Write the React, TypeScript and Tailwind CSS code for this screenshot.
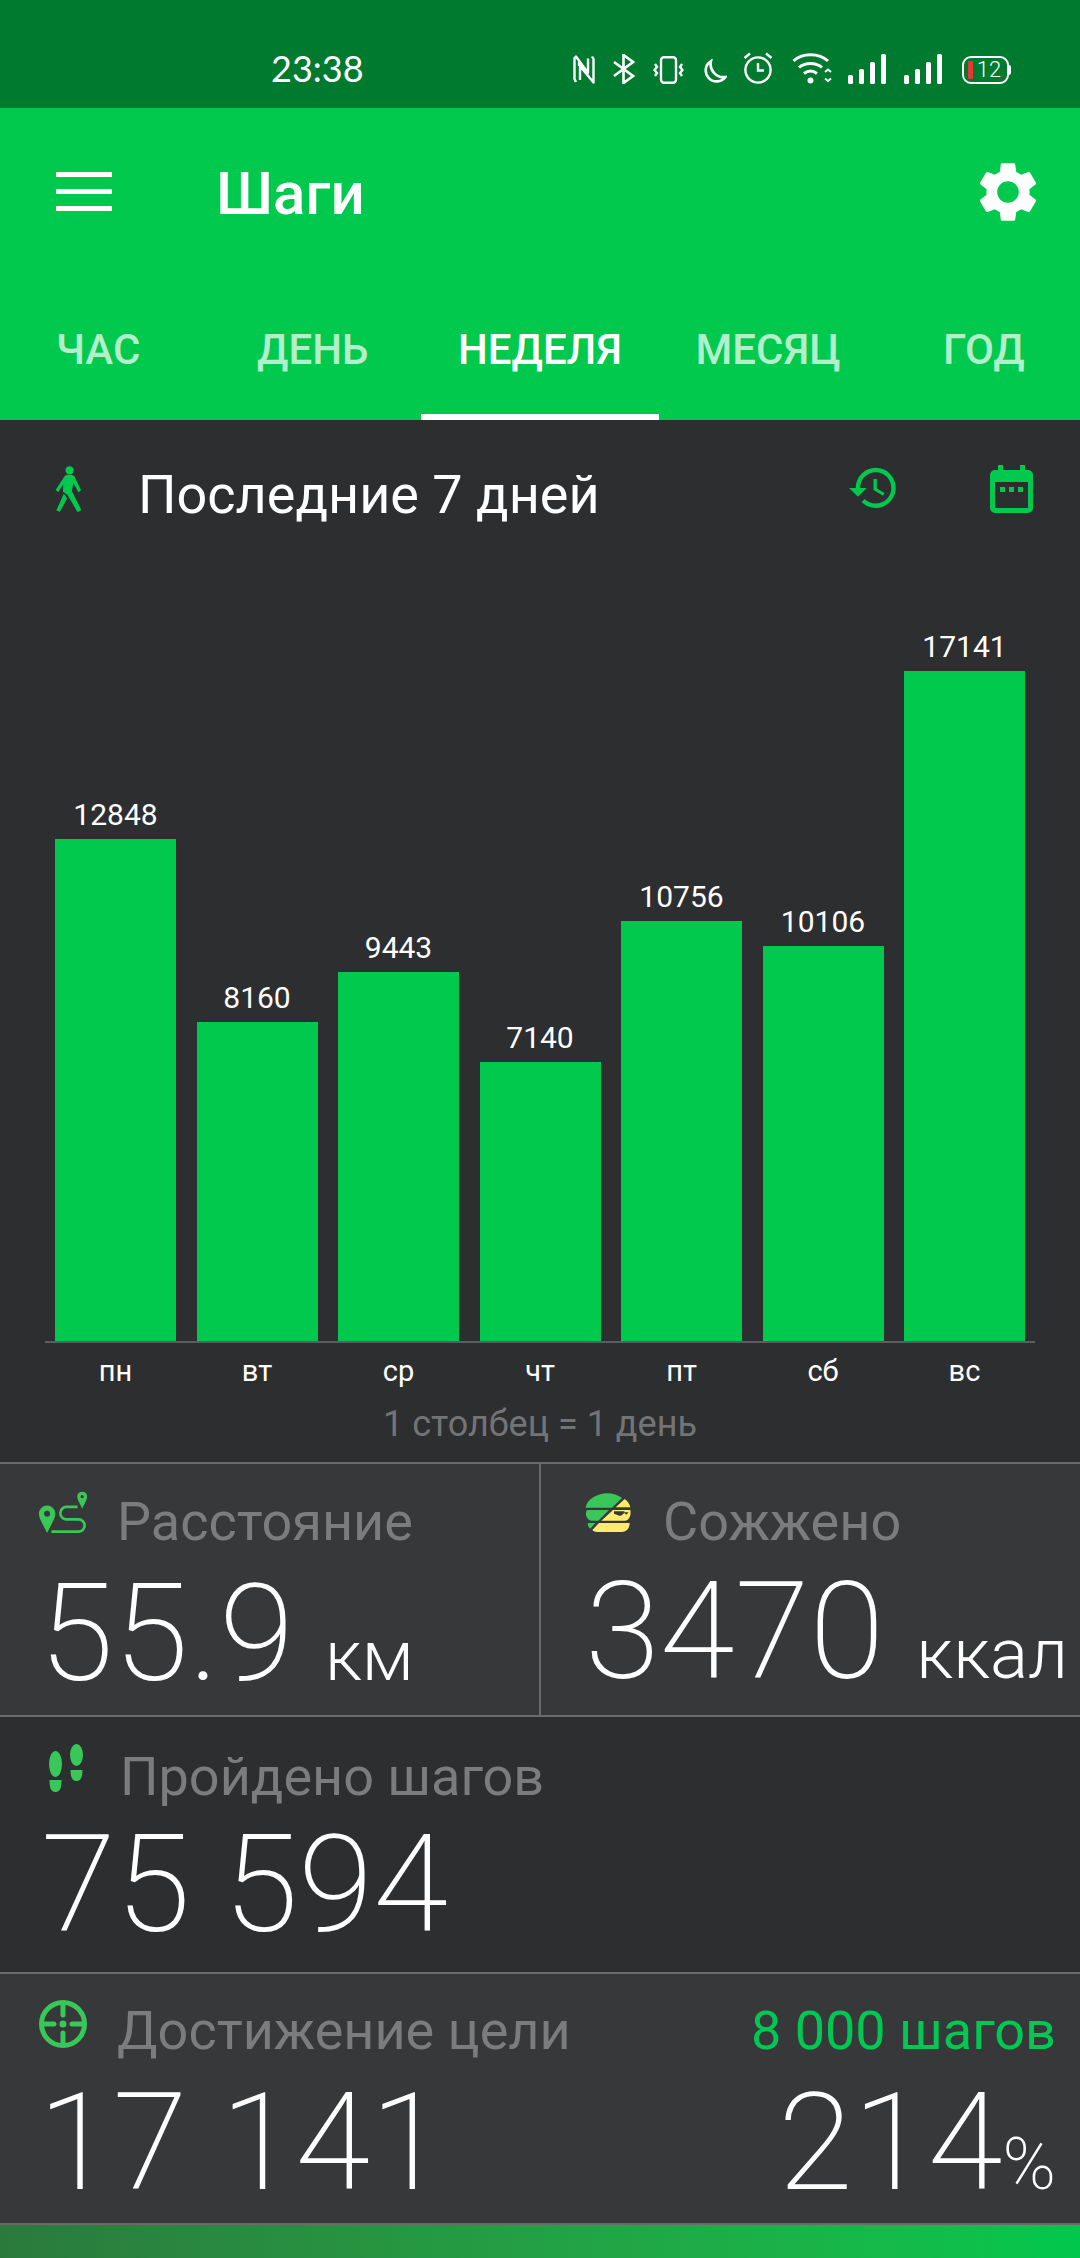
const font = { fontFamily: 'Roboto, sans-serif' };

const days = [
  { label: 'пн', value: 12848, height: 502 },
  { label: 'вт', value: 8160, height: 319 },
  { label: 'ср', value: 9443, height: 369 },
  { label: 'чт', value: 7140, height: 279 },
  { label: 'пт', value: 10756, height: 420 },
  { label: 'сб', value: 10106, height: 395 },
  { label: 'вс', value: 17141, height: 670 },
];

function SignalIcon() {
  return (
    <svg width="38" height="30" viewBox="0 0 38 30" fill="#fff">
      <rect x="0" y="21" width="5" height="9" rx="1.5" />
      <rect x="11" y="15" width="5" height="15" rx="1.5" />
      <rect x="22" y="8" width="5" height="22" rx="1.5" />
      <rect x="33" y="0" width="5" height="30" rx="1.5" />
    </svg>
  );
}

function StatusBar() {
  return (
    <div className="h-[108px] bg-[#007a2f] flex items-end pb-[24px] pl-[271px] text-white">
      <span className="w-[302px] text-[36px] leading-[32px]" style={{ fontFamily: 'Lato, sans-serif' }}>23:38</span>
      {/* nfc */}
      <svg width="22" height="29" viewBox="0 0 22 29" fill="none" stroke="#fff" strokeWidth="2.4" strokeLinejoin="round">
        <path d="M3 27 L1.5 24 V3 L3 1.5 L15 18 V3.5 M6 7 V11 M19 1.5 L20.5 4 V27.5 L7 11 V25" />
      </svg>
      <svg className="ml-[18px]" width="22" height="30" viewBox="0 0 22 30" fill="none" stroke="#fff" strokeWidth="2.6">
        <path d="M1 8 L20 22 L10.5 29 V1 L20 8 L1 22" />
      </svg>
      <svg className="ml-[18px]" width="31" height="28" viewBox="0 0 31 28" fill="none" stroke="#fff" strokeWidth="2.4">
        <rect x="8" y="1.2" width="15" height="25.6" rx="3" />
        <path d="M2 8 L4 11 L1.5 14 L4 17 L2 20 M29 8 L27 11 L29.5 14 L27 17 L29 20" />
      </svg>
      <svg className="ml-[18px]" width="25" height="25" viewBox="0 0 25 25" fill="none" stroke="#fff" strokeWidth="2.6">
        <path d="M9 2 A11 11 0 1 0 23.5 18 A13 13 0 0 1 9 2Z" />
      </svg>
      <svg className="ml-[16px]" width="30" height="32" viewBox="0 0 30 32" fill="none" stroke="#fff" strokeWidth="2.4">
        <circle cx="15" cy="18" r="12.6" />
        <path d="M15 11 V18.5 H21 M1.5 6 L7 1.5 M28.5 6 L23 1.5" />
      </svg>
      <svg className="ml-[19px]" width="40" height="31" viewBox="0 0 40 31" fill="none" stroke="#fff" strokeWidth="3">
        <path d="M1.5 8 C10 -0.5 27 -0.5 36 8 M7 14.5 C13 9 24 9 30 14.5 M12 20.5 C16 17.5 21 17.5 25 20.5" />
        <circle cx="18.5" cy="27.5" r="3" fill="#fff" stroke="none" />
        <path d="M33 19 L36 16.5 L39 19 M33 25.5 L36 28 L39 25.5" strokeWidth="2" />
      </svg>
      <span className="ml-[16px] flex"><SignalIcon /></span>
      <span className="ml-[18px] flex"><SignalIcon /></span>
      <div className="ml-[20px] relative w-[49px] h-[28px] flex items-center justify-center">
        <div className="absolute inset-y-0 left-0 right-[2px] border-[2.5px] border-white rounded-[9px]" />
        <div className="absolute right-0 top-[9px] w-[2px] h-[10px] bg-white rounded-r-[2px]" />
        <div className="absolute left-[6px] top-[5px] w-[5px] h-[18px] bg-[#e53935] rounded-[1px]" />
        <span className="text-[22px] leading-none font-light pl-[5px]" style={font}>12</span>
      </div>
    </div>
  );
}

function AppHeader() {
  const tabs = [
    { name: 'ЧАС', cls: 'w-[195px] pl-[56px] text-left' },
    { name: 'ДЕНЬ', cls: 'w-[226px] pl-[62px] text-left' },
    { name: 'НЕДЕЛЯ', cls: 'w-[238px] text-center text-white border-b-[6px] border-white' },
    { name: 'МЕСЯЦ', cls: 'w-[218px] text-center' },
    { name: 'ГОД', cls: 'flex-1 pl-[66px] text-left' },
  ];
  return (
    <div className="h-[312px] bg-[#00c94d] flex flex-col text-white" style={font}>
      <div className="h-[196px] flex items-start pt-[64px] pl-[56px] pr-[36px]">
        <div className="w-[56px] flex flex-col gap-[12px]">
          <div className="h-[5px] bg-white" />
          <div className="h-[5px] bg-white" />
          <div className="h-[5px] bg-white" />
        </div>
        <h1 className="ml-[104px] text-[60px] leading-[60px] mt-[-8px] font-medium">Шаги</h1>
        <svg className="ml-auto mt-[-16px]" width="72" height="72" viewBox="0 0 24 24" fill="#fff">
          <path d="M19.14 12.94c.04-.3.06-.61.06-.94 0-.32-.02-.64-.07-.94l2.03-1.58a.49.49 0 0 0 .12-.61l-1.92-3.32a.488.488 0 0 0-.59-.22l-2.39.96c-.5-.38-1.03-.7-1.62-.94l-.36-2.54a.484.484 0 0 0-.48-.41h-3.84c-.24 0-.43.17-.47.41l-.36 2.54c-.59.24-1.13.57-1.62.94l-2.39-.96c-.22-.08-.47 0-.59.22L2.74 8.87c-.12.21-.08.47.12.61l2.03 1.58c-.05.3-.09.63-.09.94s.02.64.07.94l-2.03 1.58a.49.49 0 0 0-.12.61l1.92 3.32c.12.22.37.29.59.22l2.39-.96c.5.38 1.03.7 1.62.94l.36 2.54c.05.24.24.41.48.41h3.84c.24 0 .44-.17.47-.41l.36-2.54c.59-.24 1.13-.56 1.62-.94l2.39.96c.22.08.47 0 .59-.22l1.92-3.32c.12-.22.07-.47-.12-.61l-2.01-1.58zM12 15.6c-1.98 0-3.6-1.62-3.6-3.6s1.62-3.6 3.6-3.6 3.6 1.62 3.6 3.6-1.62 3.6-3.6 3.6z" />
        </svg>
      </div>
      <div className="flex-1 flex text-[42px] font-medium text-[#b3efca]">
        {tabs.map((tab) => (
          <div key={tab.name} className={tab.cls + ' pt-[23px] leading-[46px]'}>
            {tab.name}
          </div>
        ))}
      </div>
    </div>
  );
}

function ChartPanel() {
  return (
    <div className="h-[1042px] bg-[#2d2e30] flex flex-col" style={font}>
      <div className="h-[176px] flex items-start pl-[55px] pr-[47px] pt-[45px]">
        <svg width="27" height="48" viewBox="75 42 85 148" fill="#00c94d">
          <circle cx="121" cy="57" r="13" />
          <path d="M106 74C113 70 130 70 136 76L157 120L149 127L133 97L128 122L158 182L146 189L114 134L100 125L101 102L85 126L77 119Z" />
          <path d="M103 130L113 146L90 188L79 184Z" />
        </svg>
        <span className="ml-[56px] text-[54px] leading-[60px] text-white">Последние 7 дней</span>
        <svg className="ml-auto mt-[2px]" width="49" height="44" viewBox="1 3 22 19" fill="#00c94d">
          <path d="M13 3a9 9 0 0 0-9 9H1l3.89 3.89.07.14L9 12H6c0-3.87 3.13-7 7-7s7 3.13 7 7-3.13 7-7 7c-1.93 0-3.68-.79-4.94-2.06l-1.42 1.42A8.954 8.954 0 0 0 13 21a9 9 0 0 0 0-18zm-1 5v5l4.28 2.54.72-1.21-3.5-2.08V8H12z" />
        </svg>
        <svg className="ml-[92px]" width="43" height="48" viewBox="0 0 43 48" fill="#00c94d">
          <path fillRule="evenodd" d="M8 0h5v5h17V0h5v5h3a5 5 0 0 1 5 5v33a5 5 0 0 1-5 5H5a5 5 0 0 1-5-5V10a5 5 0 0 1 5-5h3V0zM5 17v26h33V17H5z" />
          <rect x="10" y="22" width="5" height="5" />
          <rect x="19" y="22" width="5" height="5" />
          <rect x="28" y="22" width="5" height="5" />
        </svg>
      </div>
      <div className="flex-1 px-[55px] flex items-end gap-[20.5px]">
        {days.map((day) => (
          <div key={day.label} className="w-[121px] flex flex-col items-center">
            <span className="text-[30px] leading-[36px] mb-[6px] text-white">{day.value}</span>
            <div className="w-full bg-[#00c94d]" style={{ height: day.height }} />
          </div>
        ))}
      </div>
      <div className="mx-[45px] h-[2px] bg-[#5c5d5f]" />
      <div className="px-[55px] flex gap-[20.5px] pt-[8px]">
        {days.map((day) => (
          <span key={day.label} className="w-[121px] text-center text-[29px] leading-[40px] text-white">{day.label}</span>
        ))}
      </div>
      <div className="text-center text-[36px] leading-[42px] mt-[12px] mb-[17px] text-[#737476]">1 столбец = 1 день</div>
    </div>
  );
}

function StatLabel({ children }: { children: string }) {
  return <span className="text-[54px] leading-[58px] text-[#7b7c7e]">{children}</span>;
}

function Stats() {
  return (
    <div style={font}>
      <div className="h-[253px] bg-[#37383a] border-t-[2px] border-[#6a6b6d] flex text-white">
        <div className="w-[541px] shrink-0 border-r-[2px] border-[#6a6b6d] pl-[37px] pt-[27px]">
          <div className="flex items-start">
            <svg width="50" height="43" viewBox="50 70 150 130" fill="#39c75a">
              <path fillRule="evenodd" d="M80 114a25 25 0 0 1 25 25c0 15-17 40-25 58-8-18-25-43-25-58a25 25 0 0 1 25-25zm0 16a9 9 0 1 0 0 18 9 9 0 0 0 0-18z" />
              <path fillRule="evenodd" d="M186 72a15 15 0 0 1 15 15c0 10-10 24-15 37-5-13-15-27-15-37a15 15 0 0 1 15-15zm0 10a5 5 0 1 0 0 10 5 5 0 0 0 0-10z" />
              <path d="M93 193H175a18 18 0 0 0 0-37H139a19 19 0 0 1 0-38H172" fill="none" stroke="#39c75a" strokeWidth="8" />
            </svg>
            <span className="ml-[30px] mt-[2px]"><StatLabel>Расстояние</StatLabel></span>
          </div>
          <div className="flex items-baseline pl-[2px] mt-[8px] font-extralight">
            <span className="text-[136px] leading-[150px]">55.9</span>
            <span className="ml-[31px] text-[71px] leading-none font-light">км</span>
          </div>
        </div>
        <div className="flex-1 pl-[44px] pt-[29px] overflow-hidden">
          <div className="flex items-start">
            <svg width="46" height="39" viewBox="48 75 138 117">
              <path fill="#39c75a" d="M50 118C54 92 88 76 115 76c17 0 32 5 44 14l-30 29H50z" />
              <path fill="#39c75a" d="M54 126h66l-32 32H68c-14 0-22-19-14-32zM56 165h23l-15 17c-5-3-8-10-8-17z" />
              <path fill="#ffeb6b" d="M167 93c9 6 15 15 17 25h-44z" />
              <path fill="#ffeb6b" fillRule="evenodd" d="M132 126h52c3 12-2 32-17 32h-70zM140 133l8 8 8 2 10-8 6 5 7-7z" />
              <path fill="#ffeb6b" d="M90 165h92c0 14-8 27-24 27H85c-7 0-12-3-15-6z" />
              <path fill="#37383a" d="M135 130h32l-4 5-12 8-16-6z" />
            </svg>
            <span className="ml-[32px]"><StatLabel>Сожжено</StatLabel></span>
          </div>
          <div className="flex items-baseline mt-[6px] font-extralight whitespace-nowrap">
            <span className="text-[136px] leading-[150px]">3470</span>
            <span className="ml-[32px] text-[71px] leading-none font-light">ккал</span>
          </div>
        </div>
      </div>
      <div className="h-[257px] bg-[#2d2e30] border-t-[2px] border-[#6a6b6d] pl-[49px] pt-[27px] text-white">
        <div className="flex items-start">
          <svg width="34" height="48" viewBox="0 0 34 48" fill="#39c75a">
            <ellipse cx="6.5" cy="20" rx="6.5" ry="13" />
            <path d="M0.5 36h12c0 7-1 12-6 12s-6-5-6-12z" />
            <ellipse cx="27.5" cy="11" rx="6.5" ry="11" />
            <path d="M21.5 26h12c0 6-1 11-6 11s-6-5-6-11z" />
          </svg>
          <span className="ml-[37px] mt-[4px]"><StatLabel>Пройдено шагов</StatLabel></span>
        </div>
        <div className="text-[136px] leading-[150px] font-extralight ml-[-8px] mt-[4px]">75 594</div>
      </div>
      <div className="h-[253px] bg-[#37383a] border-y-[2px] border-[#6a6b6d] pl-[39px] pr-[24px] pt-[26px] text-white">
        <div className="flex items-start">
          <svg width="48" height="48" viewBox="0 0 48 48" fill="none" stroke="#39c75a" strokeWidth="5">
            <circle cx="24" cy="24" r="21.5" />
            <path d="M24 4V15M24 33V44M4 24H15M33 24H44" strokeLinecap="round" />
            <circle cx="24" cy="24" r="3.5" fill="#39c75a" stroke="none" />
          </svg>
          <span className="ml-[30px] mt-[2px]"><StatLabel>Достижение цели</StatLabel></span>
          <span className="ml-auto mt-[2px] text-[54px] leading-[58px] text-[#00c853]">8 000 шагов</span>
        </div>
        <div className="flex items-baseline font-extralight ml-[-1px] mt-[8px]">
          <span className="text-[136px] leading-[150px]">17 141</span>
          <span className="ml-auto text-[136px] leading-[150px]">214</span>
          <span className="text-[72px] leading-none">%</span>
        </div>
      </div>
      <div className="h-[33px] bg-gradient-to-r from-[#2a7a3c] to-[#00c84c]" />
    </div>
  );
}

export default function App() {
  return (
    <div className="w-[1080px] h-[2258px] overflow-hidden bg-[#2d2e30]">
      <StatusBar />
      <AppHeader />
      <ChartPanel />
      <Stats />
    </div>
  );
}
